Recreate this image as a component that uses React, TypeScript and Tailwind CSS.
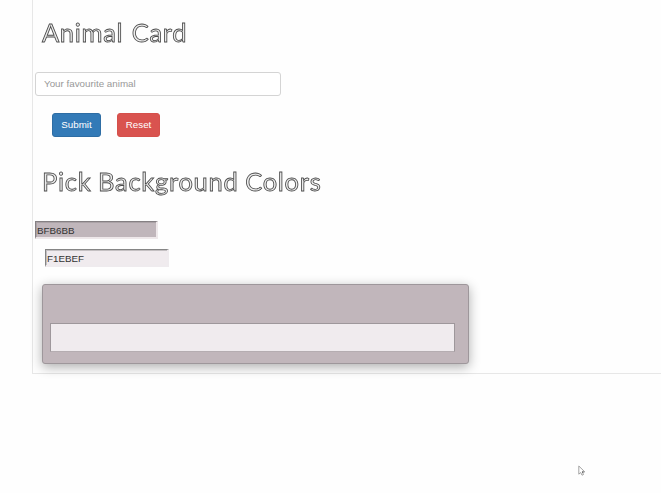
import React from "react";

function Heading({ children, className }: { children: string; className: string }) {
  return (
    <h1
      className={`whitespace-nowrap font-[Lato,sans-serif] text-[25.5px] leading-[36px] text-[#ececec] opacity-[0.99] will-change-transform [-webkit-text-stroke:0.85px_#4a4a4a] ${className}`}
    >
      {children}
    </h1>
  );
}

function Cursor() {
  return (
    <svg className="absolute left-[578px] top-[465px]" width="8" height="12" viewBox="0 0 8 12" fill="none">
      <path d="M.8 1v8.2l1.9-1.7 1.3 2.7 1.5-.7-1.2-2.6h2.5z" fill="#fff" stroke="#8c8c8c" strokeWidth=".8" />
      <path d="M4 7h1.5" stroke="#444" />
    </svg>
  );
}

export default function App() {
  return (
    <div className="relative h-[493px] w-[661px] overflow-hidden bg-[#fefefe] font-['Liberation_Sans',Arial,sans-serif]">
      <main className="ml-8 flex h-[374px] flex-col items-start border-b border-l border-[#e7e7e7] pl-0.5">
        <Heading className="ml-[7px] mt-[14px] tracking-[0.65px] [word-spacing:1.5px]">Animal Card</Heading>
        <input
          className="mt-[22px] h-6 w-[246px] rounded-[3px] border border-[#d4d4d4] bg-white px-2 pb-px text-[9.8px] text-[#555] outline-none placeholder:text-[#999]"
          placeholder="Your favourite animal"
        />
        <div className="ml-[17px] mt-[17px] flex gap-4">
          <button className="h-6 w-[49px] rounded-[3px] border border-[#2e6da4] bg-[#337ab7] text-[9.8px] text-white">Submit</button>
          <button className="h-6 w-[43px] rounded-[3px] border border-[#d5504b] bg-[#d9534f] text-[9.8px] text-white">Reset</button>
        </div>
        <Heading className="ml-[7px] mt-[26px] tracking-[0.7px] [word-spacing:-0.4px]">Pick Background Colors</Heading>
        <input
          className="mt-[22px] h-[18px] w-[123px] border-b-2 border-l border-r-2 border-t border-b-[#eee8ea] border-l-[#858083] border-r-[#eee8ea] border-t-[#858083] bg-[#c0b6bb] pl-px pt-px text-[9.8px] text-[#333] shadow-[inset_1px_1px_0_#aaa2a6] outline-none"
          defaultValue="BFB6BB"
        />
        <input
          className="ml-[10px] mt-[10px] h-[18px] w-[124px] border-b-2 border-l border-r-2 border-t border-b-[#efebee] border-l-[#858585] border-r-[#efebee] border-t-[#858585] bg-[#f0ebee] pl-px pt-px text-[9.8px] text-[#333] shadow-[inset_1px_1px_0_#c4c0c2] outline-none"
          defaultValue="F1EBEF"
        />
        <section className="ml-[7px] mt-[17px] h-20 w-[427px] shrink-0 rounded-[3px] border border-[#9e979b] bg-[#c1b6bb] pl-[7px] pt-[38px] shadow-[0_3px_12px_rgba(0,0,0,0.32)]">
          <div className="h-[29px] w-[405px] border border-[#9e979b] border-b-[#b5adb1] bg-[#f0ebee]" />
        </section>
      </main>
      <Cursor />
    </div>
  );
}
